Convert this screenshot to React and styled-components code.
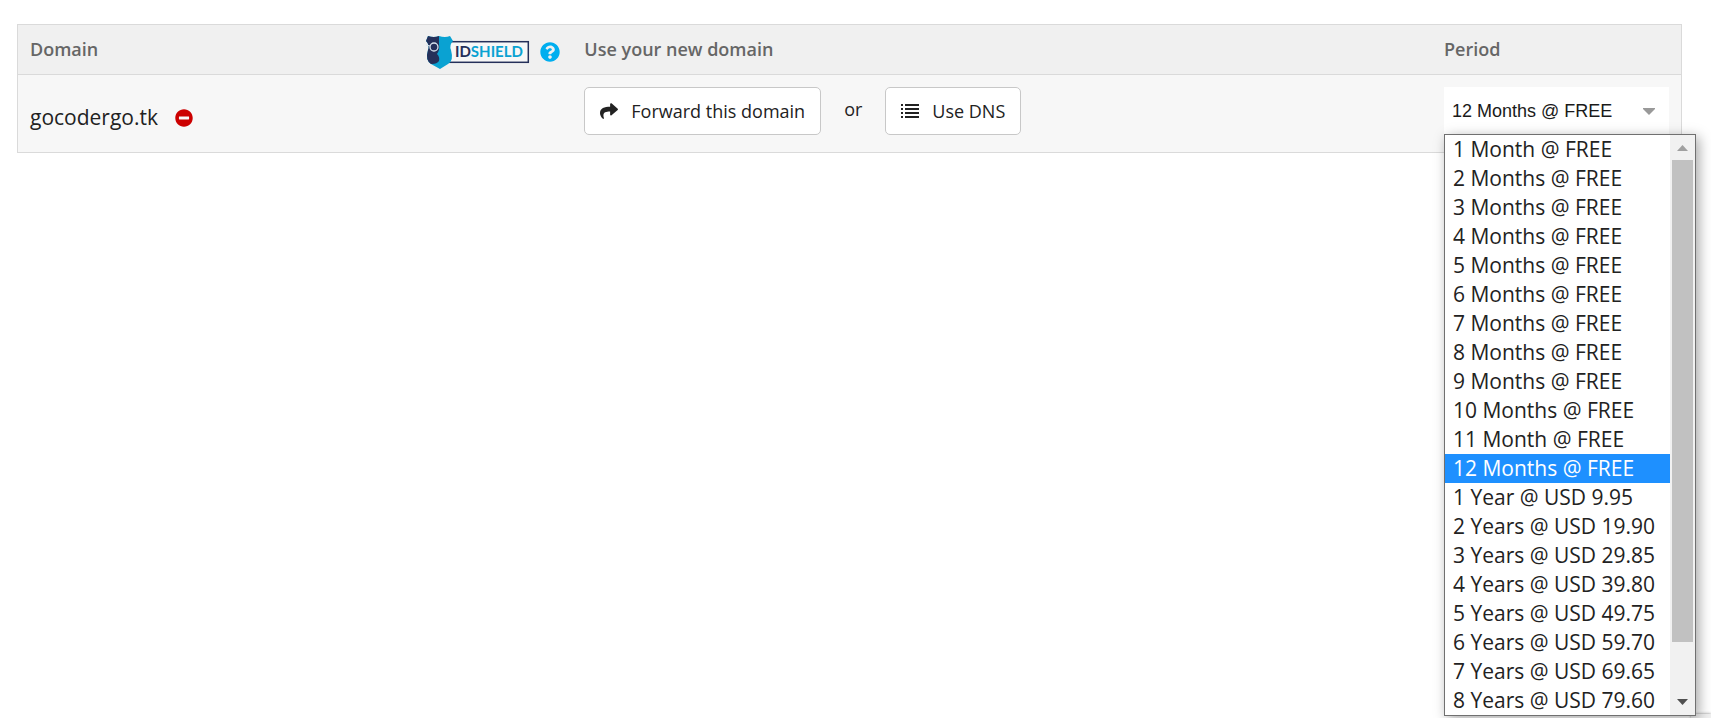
import { useState } from 'react'
import styled, { createGlobalStyle } from 'styled-components'
import { FaShare, FaMinusCircle, FaQuestionCircle } from 'react-icons/fa'

const periods = [
    "1 Month @ FREE",
    "2 Months @ FREE",
    "3 Months @ FREE",
    "4 Months @ FREE",
    "5 Months @ FREE",
    "6 Months @ FREE",
    "7 Months @ FREE",
    "8 Months @ FREE",
    "9 Months @ FREE",
    "10 Months @ FREE",
    "11 Month @ FREE",
    "12 Months @ FREE",
    "1 Year @ USD 9.95",
    "2 Years @ USD 19.90",
    "3 Years @ USD 29.85",
    "4 Years @ USD 39.80",
    "5 Years @ USD 49.75",
    "6 Years @ USD 59.70",
    "7 Years @ USD 69.65",
    "8 Years @ USD 79.60",
]

function ShieldLogo(){
    return(
        <Logo viewBox="0 -7 104 40" role="img" aria-label="IDSHIELD">
            <rect x="20" y="5.7" width="82.3" height="20.6" fill="#f7f7f7" stroke="#25305a" strokeWidth="1.5"/>
            <path d="M2 0 Q8 2 13 0 Q19 2 24 0 L27 5 Q23 9 25 14 Q28 25 22 28 L14 33 L5 28 Q-1 24 2 14 Q4 9 0 5 Z" fill="#0aa2d2"/>
            <path d="M2 0 Q8 2 13 0 V8 Q14 14 11 18 Q14 21 13 25 Q11 28 6 28 L5 28 Q-1 24 2 14 Q4 9 0 5 Z" fill="#25305a"/>
            <circle cx="8" cy="11" r="4" fill="#25305a" stroke="#d8e4ee" strokeWidth="1.3"/>
            <path d="M0 9 L4 10" stroke="#d8e4ee" strokeWidth="1.2"/>
            <LogoText x="29" y="21" fill="#25305a">ID<tspan fill="#0aa2d2">SHIELD</tspan></LogoText>
        </Logo>
    )
}

function ListIcon(){
    return(
        <ListSvg viewBox="0 0 18 14" fill="currentColor" aria-hidden="true">
            <path d="M0 0h2v2H0zM4 0h14v2H4zM0 4h2v2H0zM4 4h14v2H4zM0 8h2v2H0zM4 8h14v2H4zM0 12h2v2H0zM4 12h14v2H4z"/>
        </ListSvg>
    )
}

export default function App(){
    const [period, setPeriod] = useState("12 Months @ FREE")
    const [open, setOpen] = useState(true)
    const [removed, setRemoved] = useState(false)

    function choose(item){
        setPeriod(item)
        setOpen(false)
    }

    return(
        <>
            <GlobalStyle/>
            <Page>
                <Table>
                    <thead>
                        <tr>
                            <DomainHead>
                                <HeadContent>
                                    <span>Domain</span>
                                    <ShieldGroup>
                                        <ShieldLogo/>
                                        <Help type="button" aria-label="About ID Shield"><FaQuestionCircle/></Help>
                                    </ShieldGroup>
                                </HeadContent>
                            </DomainHead>
                            <Head>Use your new domain</Head>
                            <PeriodHead id="period">Period</PeriodHead>
                        </tr>
                    </thead>
                    <tbody>
                        {!removed &&
                            <tr>
                                <Cell>
                                    <DomainName>
                                        gocodergo.tk
                                        <Remove type="button" aria-label="Remove domain" onClick={() => setRemoved(true)}><FaMinusCircle/></Remove>
                                    </DomainName>
                                </Cell>
                                <Cell>
                                    <Actions>
                                        <Button type="button"><FaShare/>Forward this domain</Button>
                                        <Or>or</Or>
                                        <Button type="button"><ListIcon/>Use DNS</Button>
                                    </Actions>
                                </Cell>
                                <Cell>
                                    <Picker>
                                        <Select
                                            aria-labelledby="period"
                                            value={period}
                                            onChange={(e) => setPeriod(e.target.value)}
                                            onMouseDown={(e) => {
                                                e.preventDefault()
                                                setOpen(!open)
                                            }}
                                        >
                                            {periods.map((item) => <option key={item}>{item}</option>)}
                                        </Select>
                                        <Arrow viewBox="0 0 12 8"><path d="M0 1 H12 V2 L6 8 L0 2 Z" fill="#999"/></Arrow>
                                        {open &&
                                            <Popup>
                                                <Options role="listbox" aria-labelledby="period">
                                                    {periods.map((item) => (
                                                        <Option
                                                            key={item}
                                                            role="option"
                                                            aria-selected={item === period}
                                                            $selected={item === period}
                                                            onClick={() => choose(item)}
                                                        >
                                                            {item}
                                                        </Option>
                                                    ))}
                                                </Options>
                                                <Scrollbar aria-hidden="true">
                                                    <ScrollArrow viewBox="0 0 11 6"><path d="M0 6 L5.5 0 L11 6 Z" fill="#a0a0a0"/></ScrollArrow>
                                                    <Thumb/>
                                                    <ScrollArrow viewBox="0 0 11 6"><path d="M0 0 L5.5 6 L11 0 Z" fill="#505050"/></ScrollArrow>
                                                </Scrollbar>
                                            </Popup>
                                        }
                                    </Picker>
                                </Cell>
                            </tr>
                        }
                    </tbody>
                </Table>
                <CornerTab/>
            </Page>
        </>
    )
}

const GlobalStyle = createGlobalStyle`
    * {
        box-sizing: border-box;
    }

    body {
        margin: 0;
        background: #fff;
        color: #222;
        font-family: 'Open Sans', 'Noto Sans', sans-serif;
    }
`

const Page = styled.main`
    min-height: 100vh;
    padding: 24px 29px 0 17px;
`

const Table = styled.table`
    width: 100%;
    table-layout: fixed;
    border-collapse: separate;
    border-spacing: 0;
    border: 1px solid #dadada;
    background: #f7f7f7;
`

const Head = styled.th`
    height: 50px;
    padding: 0 12px 2px;
    border-bottom: 1px solid #dadada;
    background: #f0f0f0;
    color: #666;
    font-size: 18px;
    font-weight: 600;
    line-height: 24px;
    text-align: left;
`

const DomainHead = styled(Head)`
    width: calc(100% / 3);
`

const PeriodHead = styled(Head)`
    width: 249px;
`

const HeadContent = styled.div`
    display: flex;
    align-items: center;
    justify-content: space-between;
`

const ShieldGroup = styled.div`
    display: flex;
    align-items: center;
    gap: 10px;
`

const Logo = styled.svg`
    width: 104px;
    height: 40px;
    overflow: visible;
`

const LogoText = styled.text`
    font-family: Lato, sans-serif;
    font-size: 15px;
    font-weight: 700;
`

const Help = styled.button`
    display: flex;
    padding: 6px 0 0;
    border: none;
    background: none;
    color: #00aeef;
    font-size: 20px;
`

const Cell = styled.td`
    height: 77px;
    padding: 12px;
    vertical-align: top;
`

const DomainName = styled.div`
    display: flex;
    align-items: center;
    gap: 17px;
    padding-top: 16px;
    font-size: 21px;
    line-height: 29px;
`

const Remove = styled.button`
    display: flex;
    padding: 0;
    border: none;
    background: none;
    color: #c00;
    font-size: 18px;
    cursor: pointer;
`

const Actions = styled.div`
    display: flex;
    align-items: center;
`

const Button = styled.button`
    display: flex;
    align-items: center;
    gap: 13px;
    height: 48px;
    padding: 0 15px;
    border: 1px solid #c8c8c8;
    border-radius: 5px;
    background: #fff;
    color: #222;
    font-family: inherit;
    font-size: 18px;
    cursor: pointer;
`

const ListSvg = styled.svg`
    width: 18px;
    height: 14px;
`

const Or = styled.span`
    padding: 0 23px 4px;
    font-size: 18px;
`

const Picker = styled.div`
    position: relative;
    display: flex;
    align-items: center;
`

const Select = styled.select`
    width: 100%;
    height: 48px;
    padding: 0 36px 0 8px;
    border: none;
    appearance: none;
    background: #fff;
    color: #1a1a1a;
    font-family: 'Liberation Sans', Arial, sans-serif;
    font-size: 18px;
`

const Arrow = styled.svg`
    position: absolute;
    right: 14px;
    width: 12px;
    height: 8px;
    pointer-events: none;
`

const Popup = styled.div`
    position: absolute;
    z-index: 1;
    top: 47px;
    left: 0;
    display: flex;
    width: 252px;
    border: 1px solid #707070;
    background: #fff;
    box-shadow: 3px 3px 12px rgba(0, 0, 0, 0.35);
`

const Options = styled.ul`
    flex: 1;
    margin: 0;
    padding: 0;
    list-style: none;
`

const Option = styled.li`
    padding: 0 8px;
    background: ${(props) => props.$selected ? '#1e90ff' : '#fff'};
    color: ${(props) => props.$selected ? '#fff' : '#222'};
    font-size: 21px;
    line-height: 29px;
    white-space: nowrap;
    cursor: default;
`

const Scrollbar = styled.div`
    display: flex;
    flex-direction: column;
    align-items: center;
    width: 25px;
    padding: 10px 2px;
    background: #f1f1f1;
`

const ScrollArrow = styled.svg`
    width: 11px;
    height: 6px;
`

const Thumb = styled.div`
    width: 21px;
    flex: 1;
    margin: 9px 0 57px;
    background: #c1c1c1;
`

const CornerTab = styled.div`
    position: fixed;
    right: 0;
    bottom: 0;
    width: 20px;
    height: 4px;
    background: #f0f0f0;
    box-shadow: 0 0 3px rgba(0, 0, 0, 0.5);
`
